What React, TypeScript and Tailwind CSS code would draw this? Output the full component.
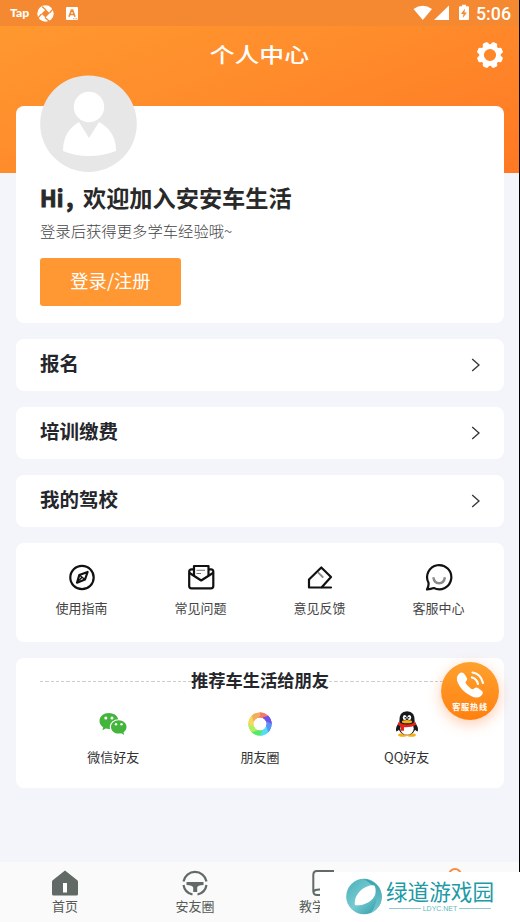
import React from "react";

const Chevron = () => (
  <svg width="10" height="14" viewBox="0 0 10 14" fill="none" stroke="#333" strokeWidth="1.3">
    <path d="M1.2 1L8 7L1.2 13" />
  </svg>
);

const MenuRow = ({ label }: { label: string }) => (
  <div className="flex h-[52px] items-center justify-between rounded-lg bg-white pl-6 pr-[23px]">
    <span className="-mt-[5px] text-[19.5px] font-bold leading-7 text-[#25262b]">{label}</span>
    <Chevron />
  </div>
);

const CompassIcon = () => (
  <svg width="28" height="28" viewBox="0 0 28 28" fill="none" stroke="#111" strokeWidth="2.2" strokeLinejoin="round">
    <circle cx="14" cy="14.500" r="11.700" />
    <path d="M19.600 9L17 16.500L9 19.700L11.300 12Z" />
    <path d="M11.300 12L17 16.500M14 14.300l-4.500 4.500" strokeWidth="1.400" />
  </svg>
);

const MailIcon = () => (
  <svg width="28" height="28" viewBox="0 0 28 28" fill="none" stroke="#111" strokeWidth="2.200" strokeLinejoin="round">
    <path d="M7 6.300H4.500Q2.200 6.300 2.200 8.800V23Q2.200 25.300 4.500 25.300H24Q26.300 25.300 26.300 23V8.800Q26.300 6.300 24 6.300H21.500" />
    <path d="M7 12.500V3H21.500V12.500" />
    <path d="M2.200 9.800L14.200 17.500L26.300 9.800" />
    <path d="M9.500 7.200H18M9.500 10.500H14" stroke="#777" strokeWidth="1.100" />
  </svg>
);

const FeedbackIcon = () => (
  <svg width="28" height="28" viewBox="0 0 28 28" fill="none" stroke="#111" strokeWidth="2.200" strokeLinejoin="round" strokeLinecap="round">
    <path d="M25 24.500H3V16.500L15.300 4.500L25 14L15.500 24.500" />
    <path d="M12.500 9.800L16.700 14" stroke="#888" strokeWidth="1.900" />
  </svg>
);

const SmileIcon = () => (
  <svg width="28" height="28" viewBox="0 0 28 28" fill="none" stroke="#111" strokeWidth="2.200" strokeLinejoin="round">
    <path d="M3.500 19.800A12.100 12.100 0 1 1 8.800 25Q5.800 26 2 26.500Q3.900 23 3.500 19.800Z" />
    <path d="M8.300 14.300Q9.300 20.300 14.100 20.300Q19 20.300 19.900 14.300" stroke="#8a8a8a" strokeWidth="2.400" />
  </svg>
);

const WechatIcon = () => (
  <svg width="28" height="24" viewBox="0 0 28 24">
    <path d="M10 1C4.600 1 .500 4.500.500 9c0 2.700 1.400 4.800 3.700 6.300L3.400 18.200l3.400-1.700c1.100.300 2.100.400 3.300.400C15.500 16.900 19.500 13.400 19.500 9S15.400 1 10 1Z" fill="#43b53c" />
    <ellipse cx="19.700" cy="15" rx="9" ry="7.700" fill="#fff" />
    <path d="M19.700 8.200C15.200 8.200 12 11.200 12 14.900s3.200 6.700 7.700 6.700c.9 0 1.800-.1 2.600-.4l2.900 1.700-.7-2.700c1.800-1.200 3-3.100 3-5.300 0-3.700-3.300-6.700-7.800-6.700Z" fill="#43b53c" />
    <g fill="#fff"><circle cx="6.800" cy="5.900" r="1.500" /><circle cx="13" cy="5.900" r="1.500" /><circle cx="17" cy="12.300" r="1.200" /><circle cx="22.500" cy="12.300" r="1.200" /></g>
  </svg>
);

const APERTURE = ["#f47c65", "#7052e6", "#5595f4", "#54dcf6", "#55e967", "#b0ee62", "#f3d95c", "#f3ae5d"];

const MomentsIcon = () => (
  <svg width="24" height="24" viewBox="0 0 24 24">
    {APERTURE.map((c, i) => (
      <path key={c} fill={c} transform={`rotate(${i * 45} 12 12)`} d="M12 .4A11.600 11.600 0 0 1 20.200 3.800L20.800 6.500L9.200 5.600Z" />
    ))}
    {APERTURE.map((c, i) => (
      <path key={c} fill={c} transform={`rotate(${i * 45} 12 12)`} d="M12 .4A11.600 11.600 0 0 1 20.200 3.800L18 6.300L9.200 5.600Z" />
    ))}
    <circle cx="12" cy="12" r="6.300" fill="#fff" />
  </svg>
);

const QQIcon = () => (
  <svg width="24" height="26" viewBox="0 0 24 26">
    <path d="M4.500 11Q0 16 1.200 20.500Q3 20 4.500 18Z M19.500 11Q24 16 22.800 20.500Q21 20 19.500 18Z" fill="#17191c" />
    <ellipse cx="7.700" cy="24" rx="4.600" ry="1.800" fill="#f7ae19" />
    <ellipse cx="16.300" cy="24" rx="4.600" ry="1.800" fill="#f7ae19" />
    <ellipse cx="12" cy="16.500" rx="8.600" ry="7.500" fill="#17191c" />
    <ellipse cx="12" cy="17.500" rx="6.700" ry="6.300" fill="#fff" />
    <path d="M4.300 11Q3.800 .300 12 .300Q20.200 .300 19.700 11Q16 15 12 15Q8 15 4.300 11Z" fill="#17191c" />
    <ellipse cx="9.700" cy="6.500" rx="1.900" ry="2.500" fill="#fff" />
    <ellipse cx="14.300" cy="6.500" rx="1.900" ry="2.500" fill="#fff" />
    <circle cx="10.300" cy="6.800" r=".8" /><circle cx="13.700" cy="6.800" r=".8" />
    <ellipse cx="12" cy="10.700" rx="5.200" ry="1.600" fill="#f7ae19" />
    <path d="M3.600 11Q12 16 20.400 11L21.300 13.700Q16 16.700 9 16.200V19.700H5.800V15.400L2.700 13.700Z" fill="#e1251b" />
  </svg>
);

const GearIcon = () => (
  <svg width="28" height="28" viewBox="-14 -14 28 28">
    {[0, 45, 90, 135, 180, 225, 270, 315].map((a) => (
      <path key={a} d="M-4 -8L-2.900 -12Q-2.500 -13.200 -1.300 -13.200H1.300Q2.500 -13.200 2.900 -12L4 -8Z" fill="#fff" transform={`rotate(${a + 22.5})`} />
    ))}
    <circle r="8.400" fill="none" stroke="#fff" strokeWidth="4.600" />
  </svg>
);

const StatusBar = () => (
  <div className="flex h-[26px] items-center bg-[#f48932] pl-[10px] pr-[9px] text-white">
    <span className="w-[20px] origin-left scale-x-[1.06] font-['Lato'] text-[11.500px] font-black leading-4">Tap</span>
    <svg className="ml-[7px]" width="17" height="17" viewBox="0 0 17 17">
      <circle cx="8.500" cy="8.500" r="8.200" fill="#fff" />
      <path d="M8.800 4.500L12.700 8.200L8.500 12.500L4.400 8.800Z" fill="#f48932" />
      <path d="M9 5L5 1.500M12.500 8L16 4M8 12.500L12 16M4.500 9L1 13" stroke="#f48932" strokeWidth="1.200" />
    </svg>
    <svg className="ml-[12px]" width="12" height="13" viewBox="0 0 12 13">
      <rect width="12" height="13" rx="1" fill="#fff" />
      <path d="M3 9.700L5.500 3H6.500L9 9.700M4 7.500H8" stroke="#f48932" strokeWidth="1.700" fill="none" />
      <path d="M7 11.700H11" stroke="#f48932" strokeWidth=".8" strokeDasharray="1 .5" />
    </svg>
    <svg className="ml-auto" width="57" height="18" viewBox="0 0 57 18" fill="#fff">
      <path d="M.500 5Q9.800-1.700 19 5L9.800 16Z" />
      <path d="M36 1.500V16H21Z" />
      <path d="M49 .800h4V2.300h2Q56 2.300 56 3.300V15Q56 16 55 16H47Q46 16 46 15V3.300Q46 2.300 47 2.300h2Z" />
      <path d="M52 4.500L48 10H50.500L49.700 14L54 8.500H51.500Z" fill="#f48932" />
    </svg>
    <span className="ml-[6px] w-[35px] whitespace-nowrap pt-px font-['Roboto'] text-[17.800px] font-medium leading-5">5:06</span>
  </div>
);

const DashedRule = () => (
  <span className="mt-[3px] h-px flex-1 bg-[repeating-linear-gradient(90deg,#cdcdcd_0px,#cdcdcd_3.3px,transparent_3.3px,transparent_5.3px)]" />
);

const SERVICES = [
  { label: "使用指南", icon: <CompassIcon /> },
  { label: "常见问题", icon: <MailIcon /> },
  { label: "意见反馈", icon: <FeedbackIcon /> },
  { label: "客服中心", icon: <SmileIcon /> },
];

const FRIENDS = [
  { label: "微信好友", icon: <WechatIcon /> },
  { label: "朋友圈", icon: <MomentsIcon /> },
  { label: "QQ好友", icon: <QQIcon /> },
];

const TABS = [
  {
    label: "首页",
    icon: (
      <svg width="26" height="26" viewBox="0 0 26 26">
        <path d="M13 .500L25 10Q26 10.500 26 12V24Q26 25.500 24.500 25.500H1.500Q0 25.500 0 24V12Q0 10.500 1 10Z" fill="#626a65" />
        <rect x="11" y="13" width="4" height="9.500" fill="#fff" />
      </svg>
    ),
  },
  {
    label: "安友圈",
    icon: (
      <svg width="26" height="26" viewBox="0 0 26 26" fill="none" stroke="#626a65" strokeWidth="2.200">
        <path d="M1.500 11.500A11.700 11.700 0 0 1 24.500 11.500M1.500 15A11.700 11.700 0 0 0 10.500 24.500M24.500 15A11.700 11.700 0 0 1 15.500 24.500" />
        <path d="M4.500 12H21.500V15Q15.500 15 15.200 17.500V22H11.200V17.500Q10.500 15 4.500 15Z" fill="#626a65" stroke="none" />
      </svg>
    ),
  },
  {
    label: "教学",
    icon: (
      <svg width="26" height="26" viewBox="0 0 26 26" fill="none" stroke="#626a65" strokeWidth="2">
        <path d="M22 1H5Q1.300 1 1.300 5V21Q1.300 25 5 25H22M1.300 21.500Q3 19.500 7 19.500H22" />
      </svg>
    ),
  },
  {
    label: "",
    icon: (
      <svg className="-mt-[2px]" width="26" height="26" viewBox="0 0 26 26" fill="none" stroke="#f78c42" strokeWidth="2">
        <circle cx="13" cy="7" r="6" /><path d="M2 25Q3 15 13 15Q23 15 24 25Z" />
      </svg>
    ),
  },
];

export default function App() {
  return (
    <div className="relative flex h-[922px] w-[520px] flex-col overflow-hidden bg-[#f4f5fa] bg-[linear-gradient(160deg,#ff9a30_0%,#ff8b2b_50%,#ff7824_100%)] bg-[length:100%_173px] bg-no-repeat font-['Noto_Sans_CJK_SC',sans-serif]">
      <StatusBar />

      <header className="grid h-[80px] grid-cols-[1fr_auto_1fr] items-start pr-[16px]">
        <span />
        <h1 className="ml-[15px] mt-[13px] scale-x-[1.2] whitespace-nowrap text-[20.700px] font-medium leading-[30px] text-white">个人中心</h1>
        <div className="mt-[15px] justify-self-end"><GearIcon /></div>
      </header>

      <main className="flex flex-col gap-4 px-4">
        <section className="flex h-[217px] flex-col items-start rounded-lg bg-white pl-6">
          <svg className="-mt-[31px]" width="97" height="97" viewBox="0 0 97 97">
            <circle cx="48.500" cy="48.700" r="48.300" fill="#e7e7e7" />
            <circle cx="49" cy="32" r="15.200" fill="#fff" />
            <path d="M39 47L49 63L59 47Q76 56 76 76Q63 81 49 81Q35 81 23 76Q23 56 39 47Z" fill="#fff" />
          </svg>
          <h2 className="mt-[9px] flex h-[32px] items-center whitespace-nowrap text-[23.200px] font-bold leading-8 text-[#292929]">
            <span className="w-[43px] text-[22px] [-webkit-text-stroke:1px_#292929]">Hi<span className="ml-[3px]">,</span></span>
            <span>欢迎加入安安车生活</span>
          </h2>
          <p className="mt-[5px] origin-left scale-x-[1.01] whitespace-nowrap text-[15.200px] font-light leading-[24px] text-[#444]">登录后获得更多学车经验哦~</p>
          <button className="mt-[16px] flex h-[48px] w-[141px] items-center justify-center rounded-[3px] bg-[#ff9833] pb-[5px] text-[18.300px] leading-6 text-white">登录/注册</button>
        </section>

        <MenuRow label="报名" />
        <MenuRow label="培训缴费" />
        <MenuRow label="我的驾校" />

        <section className="grid h-[99px] grid-cols-4 rounded-lg bg-white px-[6px] pt-5">
          {SERVICES.map((s) => (
            <div key={s.label} className="flex flex-col items-center">
              {s.icon}
              <span className="mt-[7px] text-[13px] leading-5 text-[#444]">{s.label}</span>
            </div>
          ))}
        </section>

        <section className="h-[130px] rounded-lg bg-white px-6 pt-[9px]">
          <div className="flex items-center">
            <DashedRule />
            <h3 className="-mt-px text-[17.300px] font-bold leading-[27px] text-[#25262b]">推荐车生活给朋友</h3>
            <DashedRule />
          </div>
          <div className="mt-[17px] grid grid-cols-3">
            {FRIENDS.map((f) => (
              <div key={f.label} className="flex flex-col items-center">
                <div className="flex h-[28px] items-center">{f.icon}</div>
                <span className="mt-[9px] text-[13px] leading-5 text-[#333]">{f.label}</span>
              </div>
            ))}
          </div>
        </section>
      </main>

      <nav className="mt-auto grid h-[60px] grid-cols-4 bg-[#fafafa] pt-[8px]">
        {TABS.map((t, i) => (
          <div key={i} className="flex flex-col items-center">
            {t.icon}
            <span className={`whitespace-nowrap text-[13px] leading-5 text-[#555a57] ${i === 2 ? "w-[52px] text-left" : ""}`}>{t.label}</span>
          </div>
        ))}
      </nav>

      <div className="absolute left-[441px] top-[662px] flex h-[58px] w-[58px] flex-col items-center rounded-full bg-gradient-to-b from-[#ffa12d] to-[#ff800d] pt-[8px] text-white shadow-[0_4px_14px_rgba(255,130,60,0.4)]">
        <svg width="32" height="31" viewBox="0 0 32 31">
          <path d="M4 5Q7 1 10 3.500L13 8Q14 10 11.500 12Q11 13 15 17Q18 20 19.500 19Q21.500 16.500 24 18L28 21Q30 23 27 26Q23 29 17 26Q7 21 3.500 12Q2 8 4 5Z" fill="#fff" />
          <path d="M18 7.500Q23 9 24 14M18.500 2.500Q27 4 29 13" fill="none" stroke="#fff" strokeWidth="2.200" strokeLinecap="round" />
        </svg>
        <span className="whitespace-nowrap text-[8.200px] font-bold leading-[11px] tracking-[0.7px]">客服热线</span>
      </div>

      <div className="absolute right-0 top-0 h-[872px] w-px bg-black" />

      <aside className="absolute bottom-0 right-0 flex h-[50px] w-[200px] items-start bg-white pl-[26px] pt-[6px]">
        <svg width="37" height="37" viewBox="0 0 37 37">
          <defs>
            <linearGradient id="orb" x1="0" y1="0" x2="1" y2="1">
              <stop offset="0" stopColor="#48aeba" /><stop offset=".5" stopColor="#78cbd0" /><stop offset="1" stopColor="#2396a4" />
            </linearGradient>
            <linearGradient id="arc" x1="0" y1="0" x2="0" y2="1">
              <stop offset="0" stopColor="#379faf" /><stop offset="1" stopColor="#7bcbd0" />
            </linearGradient>
          </defs>
          <circle cx="18" cy="18.500" r="17.800" fill="url(#orb)" />
          <path d="M17 .700Q34 3 35.800 18Q36 30 25 35Q33 24 29 13Q26 5 17 .700Z" fill="url(#arc)" />
          <path d="M9 27.300C7.500 20 13 12 20 9C24 7.200 28 6.500 29 8.500C31 15 28.500 20.500 23 24C18 27 13 27.600 9 27.300Z" fill="#fff" />
        </svg>
        <div className="ml-[3px] flex w-[109px] flex-col">
          <span className="whitespace-nowrap text-[21.600px] font-normal leading-[26px] text-[#209aa5]">绿道游戏园</span>
          <div className="ml-[3px] mt-px flex w-[102px] items-center gap-[2px]">
            <span className="h-px flex-1 bg-[#8fcbd0]" />
            <span className="font-['Liberation_Sans',sans-serif] text-[7px] leading-[7px] text-[#65b8bf]">LDYC.NET</span>
            <span className="h-px flex-1 bg-[#8fcbd0]" />
          </div>
        </div>
      </aside>
    </div>
  );
}
